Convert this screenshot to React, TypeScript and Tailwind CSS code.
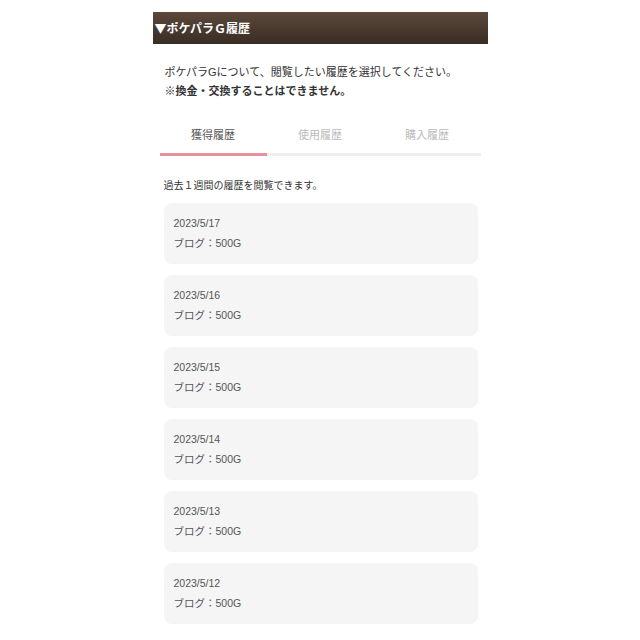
import { useState } from 'react';

const tabs = ['獲得履歴', '使用履歴', '購入履歴'];

const history = [
  { date: '2023/5/17', label: 'ブログ', amount: '500G' },
  { date: '2023/5/16', label: 'ブログ', amount: '500G' },
  { date: '2023/5/15', label: 'ブログ', amount: '500G' },
  { date: '2023/5/14', label: 'ブログ', amount: '500G' },
  { date: '2023/5/13', label: 'ブログ', amount: '500G' },
  { date: '2023/5/12', label: 'ブログ', amount: '500G' },
];

export default function App() {
  const [active, setActive] = useState(0);

  return (
    <div className="min-h-screen bg-white font-['Liberation_Sans','Noto_Sans_CJK_JP',sans-serif] text-[#333]">
      <div className="w-[335px] mx-auto pt-[12px]">
        {/* Title bar */}
        <div className="h-[32px] flex items-center pl-[2px] bg-gradient-to-b from-[#5a493b] to-[#3a2d24] text-white text-[12px] font-bold font-['Noto_Sans_CJK_JP',sans-serif]">
          ▼ポケパラＧ履歴
        </div>

        {/* Intro */}
        <div className="pt-[19px] px-[12px] text-[11px] leading-[19px]">
          <p>ポケパラGについて、閲覧したい履歴を選択してください。</p>
          <p className="font-bold">※換金・交換することはできません。</p>
        </div>

        {/* Tabs */}
        <div className="mt-[26px] mx-[7px] grid grid-cols-3">
          {tabs.map((tab, i) => (
            <button
              key={tab}
              onClick={() => setActive(i)}
              className="flex flex-col items-center"
            >
              <span
                className={
                  'text-[11px] leading-[16px] pb-[10px] ' +
                  (i === active ? 'text-[#555]' : 'text-[#bbb]')
                }
              >
                {tab}
              </span>
              <span
                className={
                  'w-full h-[3px] ' +
                  (i === active ? 'bg-[#e7909e]' : 'bg-[#efefef]')
                }
              ></span>
            </button>
          ))}
        </div>

        {/* Note */}
        <p className="mt-[22px] px-[11px] text-[10px] leading-[16px] text-[#333]">
          過去１週間の履歴を閲覧できます。
        </p>

        {/* History list */}
        <div className="mt-[9px] pl-[11px] pr-[10px] flex flex-col gap-[11px] pb-[20px]">
          {history.map((item) => (
            <div
              key={item.date}
              className="bg-[#f5f5f5] rounded-[8px] pt-[12px] pb-[13px] px-[10px] text-[10.5px] leading-[16px] text-[#555]"
            >
              <div>{item.date}</div>
              <div className="mt-[4px]">
                {item.label}：{item.amount}
              </div>
            </div>
          ))}
        </div>
      </div>
    </div>
  );
}
